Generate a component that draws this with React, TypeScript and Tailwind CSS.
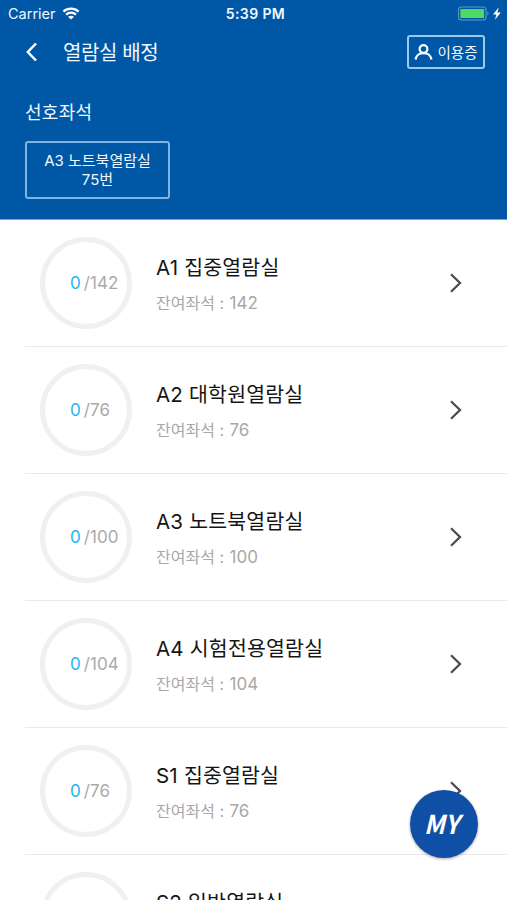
type Room = {
	code: string
	name: string
	used: number
	total: number
}

const rooms: Room[] = [
	{ code: "A1", name: "집중열람실", used: 0, total: 142 },
	{ code: "A2", name: "대학원열람실", used: 0, total: 76 },
	{ code: "A3", name: "노트북열람실", used: 0, total: 100 },
	{ code: "A4", name: "시험전용열람실", used: 0, total: 104 },
	{ code: "S1", name: "집중열람실", used: 0, total: 76 },
	{ code: "S2", name: "일반열람실", used: 0, total: 76 },
]

function StatusBar() {
	return (
		<div className="grid h-[27px] grid-cols-3 items-center pl-2 pr-[5px] text-[14px] leading-[27px]">
			<div className="flex items-center gap-[6px]">
				<span className="text-[14.5px]">Carrier</span>
				<svg width="18" height="13" viewBox="0 0 18 13" fill="none">
					<path
						d="M1.4 4.7C5.7.7 12.3.7 16.6 4.7M4.1 7.6c2.8-2.6 7-2.6 9.8 0"
						stroke="white"
						strokeWidth="2.3"
					/>
					<path d="M6 9.7c1.8-1.4 4.2-1.4 6 0l-3 2.9z" fill="white" />
				</svg>
			</div>
			<span className="pl-px text-center text-[14px] font-semibold tracking-[0.4px]">
				5:39 PM
			</span>
			<div className="flex items-center justify-end">
				<svg width="45" height="15" viewBox="0 0 45 15">
					<rect
						x="1.5"
						y="1"
						width="27.5"
						height="13"
						rx="3"
						fill="none"
						stroke="#5f96c6"
						strokeWidth="1.1"
					/>
					<rect x="3.3" y="2.9" width="23.8" height="9.2" rx="1" fill="#4cd964" />
					<path d="M30.3 5.3c1.7.7 1.7 3.7 0 4.4z" fill="#5f96c6" />
					<path d="M41.8 1.2 36 8.4h3.4l-1.4 5.4 5.8-7.3h-3.4z" fill="white" />
				</svg>
			</div>
		</div>
	)
}

function Header() {
	return (
		<header className="h-[220px] shrink-0 border-b border-[#6ba6d8] bg-[#0057a6] text-[#f0f8ff]">
			<StatusBar />
			<div className="flex h-[50px] items-center pl-[25px] pr-[22px]">
				<svg width="14" height="20" viewBox="0 0 14 20" fill="none">
					<path d="M11 1.5 2.8 10l8.2 8.5" stroke="white" strokeWidth="2.5" />
				</svg>
				<h1 className="ml-6 pt-[2px] text-[20px] leading-6 tracking-[-0.4px]">
					열람실 배정
				</h1>
				<button className="ml-auto flex h-[34px] w-[78px] items-center justify-center gap-1 rounded-[3px] border-2 border-[#9cc8ec] text-[14.5px]">
					<svg width="19" height="16" viewBox="0 0 19 16" fill="none">
						<circle cx="9.5" cy="5" r="3.9" stroke="white" strokeWidth="2.2" />
						<path
							d="M1.5 15.5c.5-4 3.9-6.4 8-6.4s7.5 2.4 8 6.4"
							stroke="white"
							strokeWidth="2.3"
						/>
					</svg>
					<span className="pt-px leading-5">이용증</span>
				</button>
			</div>
			<div className="px-[25px] pt-6">
				<h2 className="text-[18px] leading-6 tracking-[0.3px]">선호좌석</h2>
				<button className="mt-4 block h-[58px] w-[145px] rounded-[3px] border-2 border-[#7db4e2] text-[15px] leading-[19px]">
					A3 노트북열람실
					<br />
					75번
				</button>
			</div>
		</header>
	)
}

function RoomRow({ room }: { room: Room }) {
	return (
		<li className="ml-[25px] flex h-[127px] items-center border-b border-[#e9e9e9]">
			<div className="ml-[15px] flex size-[92px] shrink-0 items-center rounded-full border-[5px] border-[#f0f0f0] pl-[25px] text-[17px] leading-6 text-[#aaaaaa]">
				<span className="mr-[3px] text-[#27b5ee]">{room.used}</span>
				<span className="tracking-[0.1px]">/{room.total}</span>
			</div>
			<div className="ml-6 flex-1 pt-0.5">
				<h3 className="text-[20.5px] leading-[30px] tracking-[0.2px] text-[#151515]">
					{room.code} {room.name}
				</h3>
				<p className="mt-[8px] text-[16px] leading-6 text-[#a8a8a8]">
					잔여좌석 :{" "}
					<span className="ml-px text-[17px]">{room.total - room.used}</span>
				</p>
			</div>
			<svg
				className="mr-[44px]"
				width="14"
				height="22"
				viewBox="0 0 14 22"
				fill="none"
			>
				<path d="M2 2.2 11 11l-9 8.8" stroke="#4d4d4d" strokeWidth="2.3" />
			</svg>
		</li>
	)
}

export default function App() {
	return (
		<div className="relative flex h-[900px] w-full flex-col overflow-hidden bg-white font-['Inter','Noto_Sans_CJK_KR',sans-serif]">
			<Header />
			<ul>
				{rooms.map((room) => (
					<RoomRow key={room.code} room={room} />
				))}
			</ul>
			<button className="absolute bottom-[42px] right-[29px] size-[68px] rounded-full bg-[#0f50a6] pb-1 pr-1 font-['Noto_Sans_CJK_KR',sans-serif] text-[26px] font-bold italic text-white shadow-[0_1px_3px_rgba(0,0,0,0.35)]">
				<span className="inline-block scale-x-94">MY</span>
			</button>
		</div>
	)
}
